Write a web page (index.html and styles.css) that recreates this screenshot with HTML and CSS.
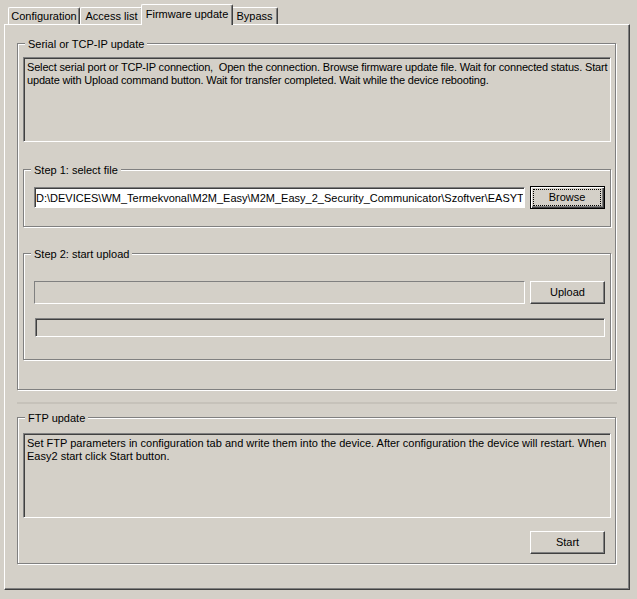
FILE: index.html
```html
<!DOCTYPE html>
<html>
<head>
<meta charset="utf-8">
<title>Firmware update</title>
<link rel="stylesheet" href="styles.css">
</head>
<body>
<div class="window">
  <div class="tabs">
    <div class="tab tab-config">Configuration</div>
    <div class="tab tab-access">Access list</div>
    <div class="tab tab-firmware active">Firmware update</div>
    <div class="tab tab-bypass">Bypass</div>
  </div>
  <div class="tabpage">
    <div class="group group-serial">
      <div class="group-title">Serial or TCP-IP update</div>
      <div class="memo memo-serial">Select serial port or TCP-IP connection,&nbsp; Open the connection. Browse firmware update file. Wait for connected status. Start<br>update with Upload command button. Wait for transfer completed. Wait while the device rebooting.</div>

      <div class="group group-step1">
        <div class="group-title">Step 1: select file</div>
        <div class="row row-step1">
          <input class="edit" type="text" readonly value="D:\DEVICES\WM_Termekvonal\M2M_Easy\M2M_Easy_2_Security_Communicator\Szoftver\EASYTERM.bin">
          <button class="btn btn-default" type="button"><span class="focus">Browse</span></button>
        </div>
      </div>

      <div class="group group-step2">
        <div class="group-title">Step 2: start upload</div>
        <div class="row row-step2">
          <div class="edit edit-disabled"></div>
          <button class="btn" type="button">Upload</button>
        </div>
        <div class="progress"></div>
      </div>
    </div>

    <div class="separator"></div>

    <div class="group group-ftp">
      <div class="group-title">FTP update</div>
      <div class="memo memo-ftp">Set FTP parameters in configuration tab and write them into the device. After configuration the device will restart. When<br>Easy2 start click Start button.</div>
      <div class="row row-start">
        <button class="btn" type="button">Start</button>
      </div>
    </div>
  </div>
</div>
</body>
</html>
```

FILE: styles.css
```css
* {
  box-sizing: border-box;
}

html, body {
  margin: 0;
  padding: 0;
  background: #d4d0c8;
}

body {
  font-family: "Liberation Sans", Arial, sans-serif;
  font-size: 11px;
  color: #000;
}

.window {
  width: 637px;
  height: 599px;
  overflow: hidden;
}

/* ---------- Tabs ---------- */
.tabs {
  display: flex;
  align-items: flex-end;
  height: 24px;
  padding-left: 8px;
}

.tab {
  height: 17px;
  padding-top: 2px;
  line-height: 13px;
  text-align: center;
  white-space: nowrap;
  border-top: 1px solid #fff;
  border-left: 1px solid #fff;
  border-right: 1px solid #404040;
  border-radius: 2px 2px 0 0;
  box-shadow: inset -1px 0 0 #808080;
  background: #d4d0c8;
}

.tab-config { width: 72px; }
.tab-access { width: 63px; }
.tab-firmware { width: 88px; }
.tab-bypass { width: 47px; }

.tab.active {
  width: 92px;
  height: 21px;
  padding-top: 3px;
  margin: 0 -2px -1px -2px;
  position: relative;
  z-index: 1;
}

/* ---------- Tab page ---------- */
.tabpage {
  margin-left: 4px;
  width: 626px;
  height: 566px;
  border-style: solid;
  border-width: 1px;
  border-color: #fff #404040 #404040 #fff;
  box-shadow: inset -1px -1px 0 #808080;
}

/* ---------- Group boxes ---------- */
.group {
  border: 1px solid #808080;
  box-shadow: inset 1px 1px 0 #fff, 1px 1px 0 #fff;
}

.group-title {
  width: fit-content;
  height: 13px;
  line-height: 13px;
  margin: -6px 0 0 7px;
  padding: 0 3px;
  background: #d4d0c8;
  white-space: nowrap;
}

.group-serial {
  margin: 18px 0 0 12px;
  width: 599px;
  height: 347px;
}

.group-step1 {
  margin: 27px 0 0 5px;
  width: 588px;
  height: 58px;
}

.group-step2 {
  margin: 26px 0 0 5px;
  width: 588px;
  height: 107px;
}

.group-ftp {
  margin: 13px 0 0 12px;
  width: 599px;
  height: 147px;
}

/* ---------- Memo boxes ---------- */
.memo {
  width: 588px;
  height: 85px;
  margin-left: 5px;
  padding: 3px 2px 0 3px;
  line-height: 13px;
  white-space: nowrap;
  overflow: hidden;
  border-style: solid;
  border-width: 1px;
  border-color: #808080 #fff #fff #808080;
  box-shadow: inset 1px 1px 0 #404040;
  background: #d4d0c8;
}

.memo-serial {
  margin-top: 6px;
  letter-spacing: -0.17px;
}

.memo-ftp { margin-top: 8px; }

/* ---------- Rows ---------- */
.row {
  display: flex;
  align-items: center;
  gap: 5px;
}

.row-step1 {
  margin: 9px 0 0 10px;
}

.row-step2 {
  margin: 20px 0 0 10px;
}

.row-start {
  margin: 13px 10px 0 0;
  justify-content: flex-end;
}

/* ---------- Edits ---------- */
.edit {
  width: 491px;
  height: 21px;
  margin: 0;
  padding: 0 1px;
  font: inherit;
  color: #000;
  background: #fff;
  border-style: solid;
  border-width: 1px;
  border-color: #808080 #fff #fff #808080;
  box-shadow: inset 1px 1px 0 #404040;
  outline: none;
}

.edit-disabled {
  height: 23px;
  background: #d4d0c8;
  box-shadow: none;
}

/* ---------- Progress ---------- */
.progress {
  margin: 14px 0 0 11px;
  width: 570px;
  height: 19px;
  border-style: solid;
  border-width: 1px;
  border-color: #808080 #fff #fff #808080;
  box-shadow: inset 1px 1px 0 #404040;
}

/* ---------- Buttons ---------- */
.btn {
  width: 75px;
  height: 23px;
  margin: 0;
  padding: 0;
  font: inherit;
  line-height: 13px;
  color: #000;
  background: #d4d0c8;
  border-style: solid;
  border-width: 1px;
  border-color: #fff #404040 #404040 #fff;
  box-shadow: inset -1px -1px 0 #808080;
  text-align: center;
  cursor: default;
}

.btn-default {
  border: 1px solid #000;
  box-shadow: inset 1px 1px 0 #fff, inset -1px -1px 0 #404040, inset -2px -2px 0 #808080;
  display: flex;
  padding: 2px 3px 2px 2px;
}

.focus {
  flex: 1;
  display: flex;
  align-items: center;
  justify-content: center;
  border: 1px dotted #000;
}

/* ---------- Separator ---------- */
.separator {
  margin: 12px 0 0 12px;
  width: 600px;
  height: 2px;
  background: #c6c2ba;
}
```
